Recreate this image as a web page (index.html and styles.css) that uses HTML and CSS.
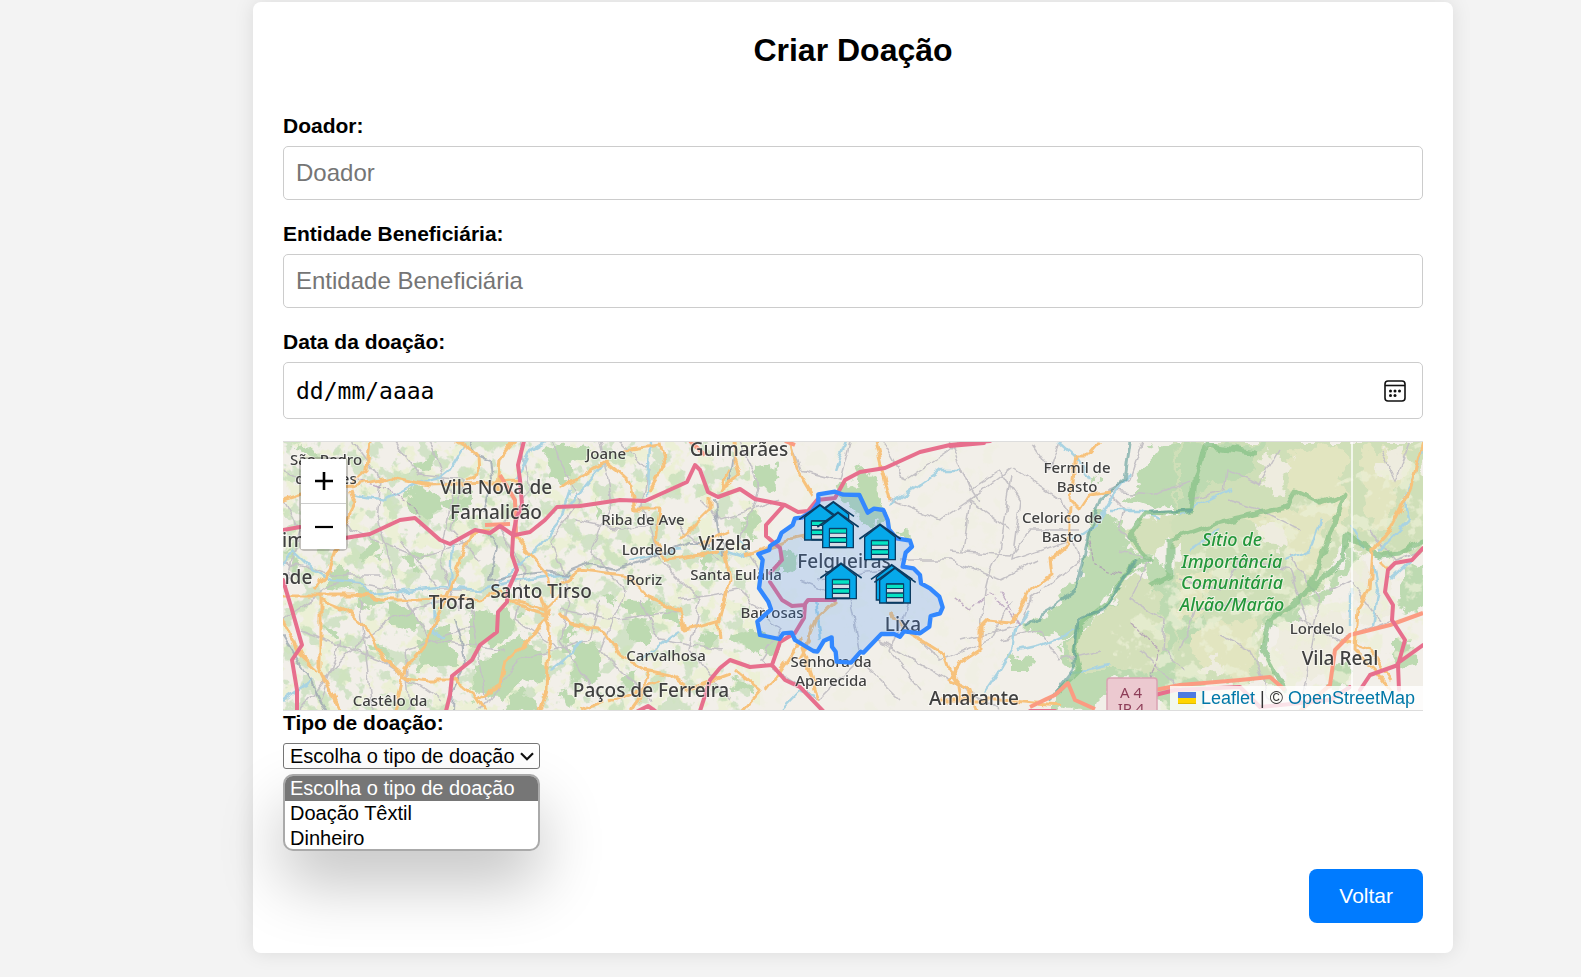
FILE: index.html
```html
<!DOCTYPE html>
<html lang="pt">
<head>
<meta charset="utf-8">
<title>Criar Doação</title>
<link rel="stylesheet" href="styles.css">
</head>
<body>
<main class="card">
  <h1 class="title">Criar Doação</h1>
  <form class="form">
    <div class="field">
      <label for="doador">Doador:</label>
      <input class="control" id="doador" type="text" placeholder="Doador">
    </div>
    <div class="field">
      <label for="entidade">Entidade Beneficiária:</label>
      <input class="control" id="entidade" type="text" placeholder="Entidade Beneficiária">
    </div>
    <div class="field">
      <label for="data">Data da doação:</label>
      <div class="control date">
        <input class="date-input" id="data" type="text" placeholder="dd/mm/aaaa">
        <button class="date-button" type="button" aria-label="Abrir calendário">
          <svg width="22" height="22" viewBox="0 0 22 22" fill="none" stroke="#111" stroke-width="1.6"><rect x="1" y="1" width="20" height="20" rx="3"/><path d="M1 5.5h20"/><g fill="#111" stroke="none"><circle cx="6.5" cy="11" r="1.5"/><circle cx="11" cy="11" r="1.5"/><circle cx="15.5" cy="11" r="1.5"/><circle cx="6.5" cy="15.5" r="1.5"/><circle cx="11" cy="15.5" r="1.5"/></g></svg>
        </button>
      </div>
    </div>

    <div class="map">
      <svg class="map-canvas" viewBox="283 441 1140 270" preserveAspectRatio="xMidYMid slice">
        <defs>
          <filter id="rough" x="-5%" y="-5%" width="110%" height="110%"><feTurbulence type="fractalNoise" baseFrequency="0.06" numOctaves="4" seed="4"/><feDisplacementMap in="SourceGraphic" scale="26" xChannelSelector="R" yChannelSelector="G"/></filter>
          <filter id="wiggle" x="-5%" y="-5%" width="110%" height="110%"><feTurbulence type="fractalNoise" baseFrequency="0.07" numOctaves="2" seed="9"/><feDisplacementMap in="SourceGraphic" scale="9" xChannelSelector="R" yChannelSelector="G"/><feGaussianBlur stdDeviation="0.4"/></filter>
          <filter id="speckle" x="0" y="0" width="100%" height="100%"><feTurbulence type="fractalNoise" baseFrequency="0.06" numOctaves="4" seed="12"/><feColorMatrix values="0 0 0 0 .51  0 0 0 0 .71  0 0 0 0 .44  0 14 0 0 -7.5"/><feComposite in2="SourceGraphic" operator="in"/></filter>
          <filter id="meadow" x="0" y="0" width="100%" height="100%"><feTurbulence type="fractalNoise" baseFrequency="0.06" numOctaves="4" seed="31"/><feColorMatrix values="0 0 0 0 .84  0 0 0 0 .87  0 0 0 0 .67  0 10 0 0 -5.3"/><feComposite in2="SourceGraphic" operator="in"/></filter>
          <g id="warehouse" stroke="#0b3b61" stroke-width="4">
            <path fill="#06a9ea" d="M-46 38 0 2 46 38V106H-46Z"/>
            <path fill="none" stroke-width="5" d="M-62 44 0 0 62 44"/>
            <path fill="#0b3b61" stroke-width="3" d="M-26 48H26V106H-26Z"/>
            <path fill="none" stroke="#06e3c3" stroke-width="10" d="M-24 56H24M-24 83H24"/>
            <path fill="none" stroke="#d6dbe6" stroke-width="10" d="M-24 69H24M-24 97H24"/>
          </g>
        </defs>

        <rect x="283" y="441" width="1140" height="270" fill="#f2efe9"/>
        <path filter="url(#meadow)" d="M283 441H760V711H283Z"/>
        <path filter="url(#speckle)" opacity=".6" d="M283 441H750V711H283Z"/>
        <path filter="url(#meadow)" opacity=".25" d="M760 441H1000V711H760Z"/>

        <g filter="url(#rough)" fill="#bddab1">
          <g transform="translate(270 430) scale(.33333)">
            <path d="M820 60 900 35V160L850 150ZM420 90 490 70 500 100 430 125ZM400 180 500 170 520 230 480 270 420 240ZM510 210 600 200 610 240 540 260ZM290 330 340 350 320 400 280 380ZM400 380 460 370 440 410ZM150 430 230 420 250 480 170 470ZM260 480 340 500 330 540 270 520ZM350 540 430 530 440 600 370 590ZM460 600 540 590 560 700 440 720 450 650ZM600 560 700 530 740 570 690 640 600 650ZM620 700 740 620 820 660 840 720 700 800 600 800ZM720 800H800V845H700ZM60 50 120 40 130 70ZM40 370 90 400 60 430ZM300 640 350 650 350 700ZM170 590 210 610 190 630ZM870 660 900 640V700Z"/>
          </g>
          <g transform="translate(560 430) scale(.33333)">
            <path d="M-10 40 70 35 80 90 0 120ZM580 110 640 100 650 160 600 190ZM550 270 590 260 590 310 560 320ZM90 220 130 240 110 270ZM190 520 270 500 280 560 200 550ZM210 560 280 580 260 640 210 620ZM300 520 350 520 360 590 310 580ZM40 630 110 640 120 740 50 760ZM520 620 600 600 660 640 640 670 540 650ZM0 600 40 580 40 630ZM430 600 480 620 440 660ZM0 800 50 790 40 830ZM500 760 580 770 560 800ZM660 370 700 360 700 410 660 440ZM400 380 450 370 440 420ZM130 500 170 500 160 540ZM180 740 220 730 220 790Z"/>
          </g>
          <g transform="translate(740 470) scale(.33333)">
            <path d="M45 0 100 0 105 50 60 55ZM290 60 350 40 370 0 410 20 410 80 440 100 430 150 380 170 330 120ZM470 185 515 190 515 215 475 210ZM10 130 45 130 40 170ZM0 490 50 470 90 520 60 545 0 530Z"/>
          </g>
          <g transform="translate(950 430) scale(.33333)">
            <path d="M560 120 620 40H760V240H640L520 220 570 180ZM440 240 470 230 500 280 540 300 530 340 600 400 560 400 450 540 380 610 330 650 300 620 210 590 300 550 330 500 380 440 420 360ZM180 690 250 680 240 720 180 720ZM330 660 460 550 600 400 700 430 760 400V845H640L620 760 460 760 440 845 300 845 360 740ZM430 130 450 150 440 170Z"/>
            <path fill="#d4e0ba" d="M530 310 590 260 750 250V330L660 330 600 400 550 350ZM480 540 560 410 620 470 650 640 600 740 520 720 380 720 350 660 430 560Z"/>
          </g>
          <g transform="translate(1180 430) scale(.33333)">
            <path d="M-10 30H740V360L560 370 500 320 400 500 250 580 240 690 310 760 150 760 -10 750Z" fill="#cfdfb8"/>
            <path fill="#bddab1" d="M0 40H250L230 130 60 170 40 250 0 250ZM90 640 170 610 180 700 110 720ZM250 560 400 500 480 420 500 330 550 370 500 440 400 540 290 600ZM620 640 680 620 720 700 640 720ZM680 420 730 400V560L650 540ZM460 720 510 700 500 770 440 780ZM0 560 70 570 50 640 0 650Z"/>
            <path fill="#e2e5c0" d="M330 60 480 40 510 200 490 320 420 210 340 190ZM150 270 470 220 400 450 340 400 300 300ZM20 600 230 560 230 690 180 750 50 700ZM540 50 700 60 620 300 560 300ZM0 430 100 420 60 560 0 560Z"/>
            <path fill="#eeecdf" d="M260 60 340 90 300 200 250 160ZM230 290 320 280 320 350 250 340ZM300 590 500 530 520 600 460 650 440 730 330 740 290 680ZM610 60 680 40 690 100 640 170 590 120ZM530 400 620 400 630 560 530 590ZM110 680 150 730 60 730Z"/>
          </g>
        </g>
        <path filter="url(#meadow)" opacity=".7" d="M1110 630 1180 560 1423 441V650L1300 711H1120Z"/>

        <g filter="url(#wiggle)" fill="none" stroke="#c4c1c5" stroke-width="1.5">
          <path d="M283 470 330 500 352 530 420 558 470 541M352 441 380 480 376 520 391 560 396 600M430 441 452 500 440 560 458 610M395 441 420 475 463 480 452 530 480 560M283 620 340 580 400 590 430 640 505 650M300 711 340 660 390 620 445 600M340 640 320 700M360 600 372 711M283 560 330 575 380 575M410 711 405 650 475 625M470 600 486 700M520 441 530 490 500 530 525 570 515 620 560 650M550 441 580 500 550 540 570 590 560 640 600 700M480 711 520 660 590 640 600 600M600 441 612 500 590 550 625 590 600 650 650 700M640 500 660 560 700 600 690 650 730 700M575 520 620 530 670 520 720 560M680 600 740 590 780 630 760 660 820 700M640 600 660 640 720 650M700 500 720 520 780 500M740 441 760 490 740 540 760 570M620 441 650 470 640 510M560 610 620 620 680 610M300 630 380 660 440 700M283 500 300 530 285 590M400 540 440 590 470 590"/>
          <path d="M790 441 800 470 840 480 850 441M883 441 905 480 950 450 960 441M890 500 940 520 970 500 1010 530M900 560 950 560 1000 580 1040 560M950 441 970 490 1000 470 1020 500 1012 560 1070 540M963 550 970 500 1012 467M1012 467 1060 500 1073 520M950 551 1010 555 1030 530 1080 530M980 640 985 590 990 570 1000 550 1012 475M880 640 950 680 1000 711M900 620 940 660 990 640 1012 600M820 700 860 660 900 700M960 640 1020 625 1030 600 1080 560 1073 540M800 580 850 600 860 650M820 580 880 570 910 600 890 650 920 690M940 470 960 470 980 500M1033 445 1050 470 1060 441M1143 441 1130 480 1108 490M1110 495 1125 510 1120 530 1140 545M1107 490 1150 495 1190 481"/>
          <path d="M1180 580 1220 590 1240 560 1290 570 1310 630M1290 555 1320 600 1300 711M1330 590 1350 580 1380 620M1190 500 1225 490 1228 470 1260 485 1280 450M1228 500 1260 510 1300 530M1140 650 1180 690M1180 650 1195 610 1250 600M1220 635 1250 650 1270 700M1120 550 1150 560 1130 600 1165 620 1163 650 1185 670M1300 620 1340 640 1390 620M1380 450 1395 480 1410 441M1370 530 1395 560 1423 550M1000 640 1040 630 1060 660 1100 650"/>
        </g>

        <g filter="url(#wiggle)" fill="none" stroke="#a9d3e2" stroke-width="2.4">
          <path d="M350 494 385 500 410 485 440 478 450 470 465 445M283 565 292 551 312 570 330 580 360 582 370 595 405 590 440 587 480 590 510 582 560 575 570 575M452 540 450 586M434 600 435 630 446 638M500 582 540 545 560 520 570 490M515 480 530 450 545 441M570 505 590 480 605 462M650 441 648 495M283 700 312 680M560 665 583 640M640 660 680 630M780 711 800 690 815 695M815 600 820 640M890 505 940 470 962 470M835 470 846 441M630 560 680 550M700 545 740 557 760 550M552 670 570 655M740 540 750 555"/>
          <path d="M1058 441 1074 455 1090 480M1073 540 1095 525 1110 500 1130 475M985 692 1000 670 1012 650 1015 630 1030 610M1018 650 1040 645 1075 630M1070 675 1110 665M1180 515 1230 490M1190 550 1220 530M1285 560 1310 550 1320 520M1350 525 1365 550M1423 450 1405 500 1408 520 1380 550M1372 560 1378 590 1372 625M1390 580 1423 550M1350 590 1350 625M1110 510 1140 510 1160 520"/>
        </g>

        <g filter="url(#wiggle)" fill="none" stroke-linecap="round" stroke-linejoin="round">
          <g stroke="#88c188" stroke-width="5" opacity=".75">
            <path d="M1195 480 1205 445 1255 453M1195 480 1192 510 1145 514 1130 535 1140 550 1150 560M1150 560 1135 562 1105 605 1080 625 1075 650 1080 670 1060 690M1150 585 1170 575 1170 540 1220 522 1286 507 1295 491 1320 503 1345 495 1310 590 1343 560 1345 535 1380 555 1400 553 1423 540M1310 590 1270 620 1263 650 1285 690"/>
          </g>
          <g stroke="#9da7b2" stroke-width="2" opacity=".8"><path d="M470 441 475 455 490 460 492 480 483 510M490 535 497 545 490 580 520 575 545 572 570 575M455 620 462 640 465 665 453 690 452 711M283 635 310 680 325 711M565 573 590 563 615 570 640 562 690 543 710 543M714 500 718 530 724 555M735 450 730 480"/></g>
          <g stroke="#ad92b5" stroke-width="1.3" stroke-dasharray="7 3 2 3" opacity=".7"><path d="M955 598 970 610 990 592 1015 620 1020 625M1090 540 1095 565 1120 575M1130 622 1160 650 1150 680M360 480 400 495 420 515M1000 592 1020 625"/></g>
          <g stroke="#5a9b98" stroke-width="3" opacity=".6"><path d="M1192 510 1150 512M1135 562 1103 610 1078 620 1073 670 1050 700M1130 441 1125 480 1100 500 1090 530 1077 590 1050 610 1025 625"/></g>
        </g>

        <g filter="url(#wiggle)" fill="none" stroke="#f7c27c" stroke-width="3" stroke-linejoin="round">
          <path d="M370 441 367 470 350 485 315 490 283 500M350 487 390 477 430 485 520 482M456 441 477 455 478 475 465 480M515 441 500 460 498 490M283 595 320 595 355 595 390 600 420 600 450 597M320 595 320 670 340 711M283 620 300 655 318 672M320 600 345 610 368 630 385 660 405 677 430 680 455 680 475 695 485 711M340 540 330 570 315 590M350 490 355 505 345 525M395 711 405 670 425 645 438 615 450 590 470 535 490 530M540 595 550 625 547 690 540 711M477 700 500 685 505 660 535 635 550 610M510 600 545 610 560 595M515 535 530 555 548 575 552 595M700 545 730 530M450 597 480 600 500 590 515 605 545 615"/>
          <path d="M560 490 600 465 605 462 615 470 632 485 636 510 660 510 655 540 665 560 700 555 720 550M624 450 660 445 665 465 650 490M560 585 580 570 625 575 645 595 680 610 685 630 720 620 730 580 725 550M560 613 570 625 605 630 620 655 645 670 670 675 690 690 730 675M650 670 640 700 632 711M610 701 640 690 660 680M710 496 710 510 680 540M730 470 720 490 740 475 735 462 734 441M790 441 797 470 812 495M735 670 760 690 742 711M836 600 815 620 800 660M745 555 790 540 840 530M720 640 718 620M765 690 780 670 800 640 820 700M580 711 605 701"/>
          <path d="M875 441 882 470 890 500M890 610 905 630 945 655 950 670 965 690M1100 443 1090 455 1075 455 1072 480 1070 500 1080 510 1090 495 1110 492M1070 505 1068 545 1050 560 1052 575 1030 590 1020 610 1010 622 990 620 980 630 980 650 960 663 950 680 970 690 975 711M955 666 960 700M1423 443 1410 490 1390 530 1373 550 1370 590 1358 610 1355 650 1375 670 1390 690M1380 560 1390 570M1340 640 1370 650 1390 680M940 700 1000 700 1060 705"/>
        </g>

        <g fill="none" stroke="#fb9b82" stroke-width="4" stroke-linejoin="round">
          <path d="M500 475 515 500 516 535M485 525 510 524M690 441 705 455M785 441 795 445M1030 707 1055 695 1068 683 1075 700 1095 709M1155 690 1180 685 1240 680 1270 677 1285 690M1300 711 1330 685 1335 650 1350 635 1390 625 1423 613"/>
        </g>
        <g fill="none" stroke="#e76f8d" stroke-width="4" stroke-linejoin="round" stroke-linecap="round">
          <path d="M283 530 300 527M345 538 370 534 400 520 415 518 440 540 450 544 475 530 490 533 500 526 513 535 516 520 522 505 520 480 518 465 524 441M515 535 530 532 545 520 557 507 580 506 620 500 645 501 665 492 687 482 695 465 700 470 708 492 718 497 740 489 755 499 775 503 785 505 798 512 808 511 817 500 835 498 845 480 860 472 885 468 920 452 950 445 990 441M513 536 512 555 517 570 508 590 507 602 498 612 497 632 480 645 472 660 452 676 450 695 446 711M283 580 292 610 302 645 292 660 297 690 297 711M784 505 766 525 766 536 780 548 782 560 770 573M770 582 782 600 792 606 805 605 804 618 795 633 780 642 772 665 750 667 730 660 720 668 710 680 700 711M805 604 808 600 835 600M772 665 785 680 800 687 823 711M638 711 648 706 655 711M1423 548 1412 560 1395 563 1388 570 1385 592 1393 605 1392 620 1405 640 1398 665 1370 675 1360 690M1398 663 1423 645M1398 665 1399 690M1155 695 1175 690 1240 687 1260 707 1330 700 1350 687M950 446 984 443M1030 711H1055"/>
        </g>

        <g fill="#ecc9d0" stroke="#d9a3b2" stroke-width="1.5"><rect x="1107" y="678" width="50" height="50" rx="3"/></g>
        <path stroke="#fff" stroke-width="2" opacity=".7" d="M1352 441V711"/>

        <g class="place place-small">
          <text x="326" y="465">São Pedro</text><text x="326" y="484">de Rates</text><text x="606" y="459">Joane</text><text x="643" y="525">Riba de Ave</text><text x="649" y="555">Lordelo</text><text x="644" y="585">Roriz</text><text x="736" y="580">Santa Eulália</text><text x="772" y="618">Barrosas</text><text x="666" y="661">Carvalhosa</text><text x="390" y="706">Castêlo da</text><text x="831" y="667">Senhora da</text><text x="831" y="686">Aparecida</text><text x="1077" y="473">Fermil de</text><text x="1077" y="492">Basto</text><text x="1062" y="523">Celorico de</text><text x="1062" y="542">Basto</text><text x="1317" y="634">Lordelo</text>
        </g>
        <g class="place">
          <text x="496" y="494">Vila Nova de</text><text x="496" y="519">Famalicão</text><text x="739" y="456">Guimarães</text><text x="725" y="550">Vizela</text><text x="541" y="598">Santo Tirso</text><text x="452" y="609">Trofa</text><text x="651" y="697">Paços de Ferreira</text><text x="290" y="547">tim</text><text x="295" y="584">nde</text><text x="844" y="568">Felgueiras</text><text x="903" y="631">Lixa</text><text x="974" y="705">Amarante</text><text x="1340" y="665">Vila Real</text>
        </g>
        <g class="place place-park"><text x="1232" y="546">Sítio de</text><text x="1232" y="568">Importância</text><text x="1232" y="589">Comunitária</text><text x="1232" y="611">Alvão/Marão</text></g>
        <g class="place-road"><text x="1131" y="698">A 4</text><text x="1131" y="714">IP 4</text></g>

        <g transform="translate(740 470) scale(.33333)">
          <path fill="#3388ff" fill-opacity=".2" stroke="#3388ff" stroke-width="13" stroke-linejoin="round" d="M235 97V73L285 65 310 74 358 75 383 128 402 116 430 120 443 150 447 178 470 205 510 212 516 230 497 248 488 290 520 295 540 315 543 340 570 355 598 380 608 412 600 430 572 438 568 470 540 490 492 484 480 500 462 492 424 492 370 548 362 545 333 578 290 575 287 545 276 530 275 502 252 512 232 545 220 543 165 510 155 488 130 490 118 507 60 495 52 455 93 418 85 395 57 355 68 270 55 252 88 240 90 228 115 212 125 188 158 165 165 145 185 143 215 125Z"/>
          <use href="#warehouse" x="280" y="95"/><use href="#warehouse" x="240" y="104"/><use href="#warehouse" x="294" y="127"/><use href="#warehouse" x="420" y="163"/><use href="#warehouse" x="303" y="280"/><use href="#warehouse" x="455" y="284"/><use href="#warehouse" x="465" y="293"/>
        </g>
      </svg>
      <div class="zoom">
        <button class="zoom-button" type="button" aria-label="Aproximar"><svg width="18" height="18" viewBox="0 0 18 18" stroke="#000" stroke-width="2.6"><path d="M0 9h18M9 0v18"/></svg></button>
        <button class="zoom-button" type="button" aria-label="Afastar"><svg width="18" height="18" viewBox="0 0 18 18" stroke="#000" stroke-width="2.2"><path d="M0 9h18"/></svg></button>
      </div>
      <div class="attribution">
        <a href="#"><svg width="18" height="12" viewBox="0 0 18 12"><path fill="#4c7be1" d="M0 0h18v6H0z"/><path fill="#ffd500" d="M0 6h18v5H0z"/><path fill="#e0bc00" d="M0 11h18v1H0z"/></svg> Leaflet</a> | © <a href="#">OpenStreetMap</a>
      </div>
    </div>

    <div class="field">
      <label for="tipo">Tipo de doação:</label>
      <div class="select">
        <select class="select-box" id="tipo">
          <option>Escolha o tipo de doação</option>
          <option>Doação Têxtil</option>
          <option>Dinheiro</option>
        </select>
        <svg class="select-arrow" width="14" height="9" viewBox="0 0 14 9" fill="none" stroke="#111" stroke-width="2.2"><path d="M1 1.2l6 6 6-6"/></svg>
        <ul class="options" role="listbox" aria-label="Tipo de doação">
          <li class="option option-active" role="option" aria-selected="true">Escolha o tipo de doação</li>
          <li class="option" role="option">Doação Têxtil</li>
          <li class="option" role="option">Dinheiro</li>
        </ul>
      </div>
    </div>

    <div class="actions"><button class="back" type="button">Voltar</button></div>
  </form>
</main>
</body>
</html>
```
FILE: styles.css
```css
* { box-sizing: border-box; }

body {
  margin: 0;
  padding: 2px 128px 24px 253px;
  background: #f3f3f3;
  color: #000;
  font-family: "Liberation Sans", Arial, sans-serif;
}

button, input, select { font-family: inherit; }

.card {
  padding: 30px;
  background: #fff;
  border-radius: 8px;
  box-shadow: 0 0 20px rgba(0, 0, 0, 0.1);
}

.title {
  margin: 0 0 46px;
  font-size: 32px;
  line-height: 36px;
  text-align: center;
}

.field {
  display: flex;
  flex-direction: column;
  align-items: flex-start;
  gap: 8px;
  margin-bottom: 22px;
}

.field label {
  font-size: 21px;
  font-weight: bold;
  line-height: 24px;
}

.control {
  width: 100%;
  height: 54px;
  padding: 0 12px;
  border: 1px solid #ccc;
  border-radius: 5px;
  background: #fff;
  font-size: 24px;
}

.control::placeholder { color: #757575; }

.date {
  display: flex;
  align-items: center;
  height: 57px;
  padding-right: 16px;
}

.date-input {
  flex: 1;
  min-width: 0;
  padding: 0;
  border: 0;
  outline: 0;
  font-family: "DejaVu Sans Mono", monospace;
  font-size: 23px;
}

.date-input::placeholder { color: #000; }

.date-button {
  display: flex;
  padding: 0;
  border: 0;
  background: none;
}

.map {
  position: relative;
  height: 270px;
  border-top: 1px solid #ddd;
  border-bottom: 1px solid #ddd;
  overflow: hidden;
}

.map-canvas {
  display: block;
  width: 100%;
  height: 100%;
}

.place {
  font-family: "Noto Sans", sans-serif;
  font-size: 19px;
  font-weight: 500;
  text-anchor: middle;
  fill: #404040;
  stroke: #fff;
  stroke-opacity: 0.5;
  stroke-width: 2px;
  paint-order: stroke;
}

.place-small { font-size: 15px; }

.place-park {
  font-size: 18px;
  font-style: italic;
  fill: #22963a;
}

.place-road {
  font-family: "Noto Sans", sans-serif;
  font-size: 15px;
  text-anchor: middle;
  fill: #8d3d58;
}

.zoom {
  position: absolute;
  top: 15px;
  left: 16px;
  border: 2px solid rgba(0, 0, 0, 0.2);
  border-radius: 5px;
  background-clip: padding-box;
}

.zoom-button {
  display: flex;
  align-items: center;
  justify-content: center;
  width: 45px;
  height: 45px;
  padding: 0;
  border: 0;
  background: #fff;
}

.zoom-button:first-child { border-bottom: 1px solid #ccc; }

.attribution {
  position: absolute;
  right: 0;
  bottom: 0;
  padding: 0 8px;
  background: rgba(255, 255, 255, 0.8);
  color: #333;
  font-size: 18px;
  line-height: 24px;
}

.attribution a {
  color: #0078a8;
  text-decoration: none;
}

.select { position: relative; }

.select-box {
  display: block;
  width: 257px;
  height: 26px;
  padding: 0 6px;
  border: 1px solid #767676;
  border-radius: 3px;
  background: #fff;
  color: #000;
  font-size: 20px;
  appearance: none;
}

.select-arrow {
  position: absolute;
  top: 9px;
  right: 6px;
  pointer-events: none;
}

.options {
  position: absolute;
  top: 31px;
  left: 0;
  width: 100%;
  height: 77px;
  margin: 0;
  padding: 0;
  border: 2px solid #aaa;
  border-radius: 10px;
  background: #fff;
  box-shadow: 0 32px 64px rgba(0, 0, 0, 0.24);
  list-style: none;
  overflow: hidden;
}

.option {
  padding: 0 5px;
  font-size: 20px;
  line-height: 25px;
}

.option-active {
  background: #767676;
  color: #fff;
}

.actions {
  display: flex;
  justify-content: flex-end;
  margin-top: 100px;
}

.back {
  height: 54px;
  padding: 0 30px;
  border: 0;
  border-radius: 8px;
  background: #007bff;
  color: #fff;
  font-size: 21px;
}
```
